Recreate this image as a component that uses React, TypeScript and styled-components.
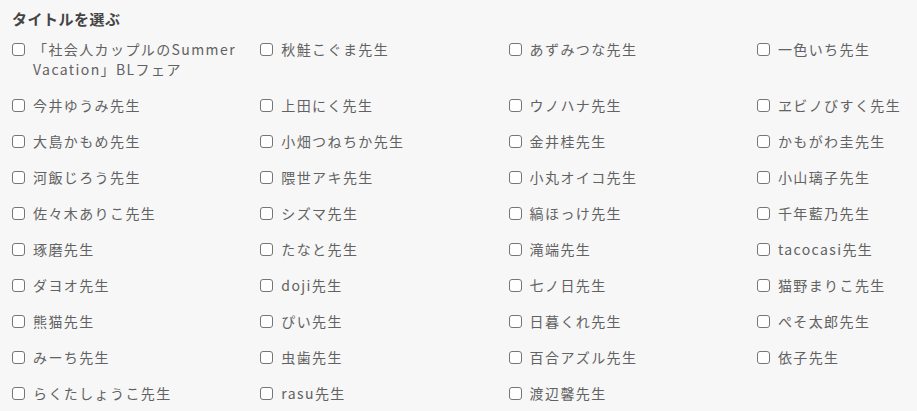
import styled, { createGlobalStyle } from "styled-components";

const GlobalStyle = createGlobalStyle`
  body {
    margin: 0;
    background-color: #f7f7f7;
    overflow: hidden;
    font-family: "Noto Sans CJK JP", "Noto Sans", sans-serif;
  }
`;

const Wrapper = styled.div`
  padding: 9px 12px 0 12px;
`;

const Heading = styled.h3`
  margin: 0 0 10px 0;
  font-size: 15px;
  line-height: 20px;
  font-weight: 700;
  color: #444;
  letter-spacing: 0.5px;
`;

const Grid = styled.div`
  display: grid;
  grid-template-columns: repeat(3, 248.3px) auto;
  row-gap: 16px;
`;

const Item = styled.label`
  display: flex;
  align-items: flex-start;
  gap: 8px;
  max-width: 228px;
  cursor: pointer;
`;

const Box = styled.input`
  appearance: none;
  flex: none;
  box-sizing: border-box;
  width: 13px;
  height: 13px;
  margin: 4px 0 0 0;
  border: 1px solid #767676;
  border-radius: 3px;
  background-color: #fff;
`;

const Label = styled.span`
  font-size: 14px;
  line-height: 20px;
  letter-spacing: 1.4px;
  color: #626262;
`;

const names = [
  "「社会人カップルのSummer Vacation」BLフェア",
  "秋鮭こぐま先生",
  "あずみつな先生",
  "一色いち先生",
  "今井ゆうみ先生",
  "上田にく先生",
  "ウノハナ先生",
  "ヱビノびすく先生",
  "大島かもめ先生",
  "小畑つねちか先生",
  "金井桂先生",
  "かもがわ圭先生",
  "河飯じろう先生",
  "隈世アキ先生",
  "小丸オイコ先生",
  "小山璃子先生",
  "佐々木ありこ先生",
  "シズマ先生",
  "縞ほっけ先生",
  "千年藍乃先生",
  "琢磨先生",
  "たなと先生",
  "滝端先生",
  "tacocasi先生",
  "ダヨオ先生",
  "doji先生",
  "七ノ日先生",
  "猫野まりこ先生",
  "熊猫先生",
  "ぴい先生",
  "日暮くれ先生",
  "ぺそ太郎先生",
  "みーち先生",
  "虫歯先生",
  "百合アズル先生",
  "依子先生",
  "らくたしょうこ先生",
  "rasu先生",
  "渡辺馨先生",
];

function App() {
  return (
    <Wrapper>
      <GlobalStyle />
      <Heading>タイトルを選ぶ</Heading>
      <Grid>
        {names.map((v) => (
          <Item key={v}>
            <Box type="checkbox" />
            <Label>{v}</Label>
          </Item>
        ))}
      </Grid>
    </Wrapper>
  );
}

export default App;
